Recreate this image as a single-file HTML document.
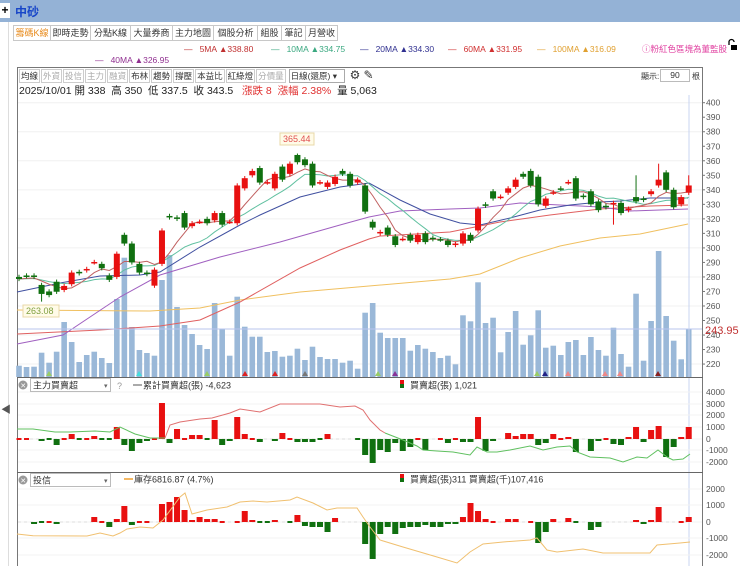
<!DOCTYPE html>
<html><head><meta charset="utf-8">
<style>
*{margin:0;padding:0;box-sizing:border-box}
body{width:740px;height:566px;overflow:hidden;background:#fff;font-family:"Liberation Sans","Noto Sans CJK TC",sans-serif;position:relative;color:#333}
.top{position:absolute;left:0;top:0;width:740px;height:22px;background:#94b2d6}
.plus{position:absolute;left:0;top:3px;width:10px;height:15px;background:#fff;font-size:12px;font-weight:bold;line-height:15px;text-align:center;color:#000}
.title{position:absolute;left:15px;top:3px;font-size:12px;font-weight:bold;color:#1846c8}
.tabs{position:absolute;left:13px;top:25px;height:16px;display:flex}
.tab{border:1px solid #c8c8c8;border-bottom:none;font-size:9px;line-height:15px;text-align:center;color:#333;background:#fff;margin-right:-1px;white-space:nowrap;overflow:hidden}
.tab.a{color:#e88a1a}
.t{position:absolute;font-size:8.5px;white-space:nowrap}
svg{position:absolute;left:0;top:0}
.tb span{border:1px solid #ccc;padding:0 1px;margin-right:1px}
</style></head><body>
<div class="top"><div class="plus">+</div><div class="title">中砂</div></div>
<div style="position:absolute;left:8px;top:22px;width:1px;height:544px;background:#ddd"></div>
<div class="tabs">
<div class="tab a" style="width:38px">籌碼K線</div><div class="tab" style="width:41px">即時走勢</div><div class="tab" style="width:41px">分點K線</div><div class="tab" style="width:43px">大量券商</div><div class="tab" style="width:42px">主力地圖</div><div class="tab" style="width:45px">個股分析</div><div class="tab" style="width:25px">組股</div><div class="tab" style="width:25px">筆記</div><div class="tab" style="width:33px">月營收</div>
</div>
<div style="position:absolute;left:13px;top:40px;width:324px;height:1px;background:#c8c8c8"></div>
<div class="t" style="left:184px;top:44px;color:#c03030">—&nbsp;&nbsp; 5MA ▲338.80</div>
<div class="t" style="left:271px;top:44px;color:#3aa880">—&nbsp;&nbsp; 10MA ▲334.75</div>
<div class="t" style="left:360px;top:44px;color:#303090">—&nbsp;&nbsp; 20MA ▲334.30</div>
<div class="t" style="left:448px;top:44px;color:#d03030">—&nbsp;&nbsp; 60MA ▲331.95</div>
<div class="t" style="left:537px;top:44px;color:#e0a030">—&nbsp;&nbsp; 100MA ▲316.09</div>
<div class="t" style="left:642px;top:43px;color:#e040a0">ⓘ粉紅色區塊為董監股</div>
<div class="t" style="left:95px;top:55px;color:#903090">—&nbsp;&nbsp; 40MA ▲326.95</div>
<svg width="740" height="566" style="z-index:2;pointer-events:none"><path d="M729 45 v-3 a2.5 2.5 0 0 1 5 0" fill="none" stroke="#000" stroke-width="1.3"/><rect x="731" y="45" width="6" height="5" fill="#000"/></svg>
<div style="position:absolute;left:17px;top:67px;width:686px;height:499px;border-left:1px solid #777;border-top:1px solid #777;border-right:1px solid #777"></div>
<div class="tb" style="position:absolute;left:19px;top:69px;display:flex;font-size:8.5px;line-height:12px">
<span>均線</span><span style="color:#aaa">外資</span><span style="color:#aaa">投信</span><span style="color:#aaa">主力</span><span style="color:#aaa">融資</span><span>布林</span><span>趨勢</span><span>撐壓</span><span>本益比</span><span>紅綠燈</span><span style="color:#aaa;margin-right:3px">分價量</span><span style="border-color:#aaa;width:56px">日線(還原)&nbsp;▾</span>
<b style="font-size:12px;margin-left:4px;line-height:12px;font-weight:normal">⚙</b><b style="font-size:12px;margin-left:3px;line-height:12px;font-weight:normal">✎</b></div>
<div class="t" style="left:641px;top:71px;font-size:8px">顯示:</div>
<div style="position:absolute;left:660px;top:69px;width:30px;height:13px;border:1px solid #bbb;font-size:8.5px;text-align:center;line-height:11px">90</div>
<div class="t" style="left:692px;top:71px;font-size:8px">根</div>
<div class="t" style="left:19px;top:83px;font-size:10.5px;color:#222">2025/10/01 開 338&nbsp; 高 350&nbsp; 低 337.5&nbsp; 收 343.5&nbsp;&nbsp; <span style="color:#e03030">漲跌 8&nbsp; 漲幅 2.38%</span>&nbsp; 量 5,063</div>
<div class="t" style="left:1px;top:401px;font-size:10px;color:#555">◀</div>
<svg id="s" width="740" height="566" viewBox="0 0 740 566" font-family="Liberation Sans, Noto Sans CJK TC, sans-serif"></svg>
<script>
var S=document.getElementById('s'),h='';
function Y(p){return 102.7+(400-p)*1.452}
function X(i){return 19+i*7.525}
for(var p=400;p>=220;p-=20)h+='<line x1="18" x2="702" y1="'+Y(p)+'" y2="'+Y(p)+'" stroke="#f0f0f0"/>';
for(var p=400;p>=220;p-=10)h+='<text x="706" y="'+(Y(p)+3)+'" font-size="8.5" fill="#555">'+p+'</text><line x1="702" x2="705" y1="'+Y(p)+'" y2="'+Y(p)+'" stroke="#777"/>';
var C=[[280,278.6],[281,280.5],[281,280],[274.5,268.3],[270,267.5],[276.7,269.8],[271,273.8],[275,283],[283.5,282.5],[284.5,285.5],[290,290.3],[289,286],[281,278],[280,296],[309,303],[303,290],[289,283],[283,282],[274,285],[289,312],[322,321],[321,320],[324,314],[315,317],[318,318],[320,317],[319,324],[324,316],[318,318],[317,343],[341,348],[350,353],[355,345],[345,345.3],[341,351],[356,347],[351,358],[364,359],[361,357],[358,343],[345,345.3],[342,345],[344,349],[353,351],[351,343],[345,347],[343,325],
[318,314],[310,311],[314,309],[308,302],[306,306.3],[309,305],[304,309],[310,304],[307,306],[306,305.7],[305,302],[302,303],[303,310],[309,305],[312,327],[330,329],[339,334],[335,335.3],[338,341],[342,347],[351,349],[353,343],[349,330],[329,334],[338,338.3],[341,340.7],[345,345.4],[348,334],[336,335],[339,330],[332,326],[329,328],[330,331],[331,324],[326,327],[335,332],[334,333],[337,339],[343,347],[352,340],[340,328],[330,335],[338,343]];
var V=[365.7,367,366.7,352.7,362.7,351.7,322,342,362,355,351.7,358,363,299,257.7,327,350,353,355.7,280,255,307,325,334,345,349,303,329,355.7,296.7,326.7,336.7,336.7,352,351,356.7,355.7,348.7,360,346.7,357,359,359,362.7,360.7,368.7,312.7,303,332.7,338,338,338,350.7,345,348.7,352,358,355.7,364.3,315.3,321.3,282.3,323,317.7,352.3,332,311,344.7,335.3,310.3,347.7,345.7,355,342,340,355,337,350,355.7,327.7,354,366.7,293.7,360.7,321,251,316,340.7,359.3,329];
function pl(pts,c){h+='<polyline fill="none" stroke="'+c+'" stroke-width="1" points="'+pts+'"/>'}
for(var i=0;i<90;i++){h+='<rect x="'+(X(i)-2.8)+'" y="'+V[i]+'" width="5.6" height="'+(377-V[i])+'" fill="#9ab8d8"/>'}
pl('17,310 150,311 200,308 240,300 300,292 369,286 450,279 480,274 520,258 560,246 600,238 640,234 688,224','#f0c060');
pl('17,334 100,330 160,326 200,320 240,302 300,268 340,250 369,239 380,236 450,232 500,222 550,215 600,209 650,206 688,205','#e06060');
pl('17,344 63,335 120,297 160,275 220,257 280,242 340,225 369,217 400,211 450,209 480,208 520,203 560,205 600,207 630,211 660,210 688,209','#a060c0');
pl('17,292 60,283 100,276 140,275 160,272 200,247 240,225 260,215 300,197 340,187 369,183 400,200 430,214 460,223 480,225 510,218 540,210 570,205 600,202 620,201 650,198 688,198','#4050a0');
h+='<line x1="18" x2="702" y1="329" y2="329" stroke="#b8c4ee"/>';
h+='<line x1="689" x2="689" y1="95" y2="566" stroke="#c8d4f0"/>';
function ma(n,col){var pts='';for(var i=0;i<90;i++){var s=0;for(var k=0;k<n;k++){var j=Math.max(0,i-k);s+=C[j][1]}pts+=X(i)+','+Y(s/n)+' '}pl(pts,col)}
ma(10,'#60c0a0');ma(5,'#c06060');
for(var i=0;i<90;i++){var o=C[i][0],c=C[i][1],up=c>=o,col=up?'#e81010':'#107010';var hi=Math.max(o,c)+1.5,lo=Math.min(o,c)-1.5;if(i==37)hi=365;if(i==79)lo=316;if(i==82)hi=350;if(i==85)hi=358;if(i==89)hi=350;if(i==3)lo=263;
h+='<line x1="'+X(i)+'" x2="'+X(i)+'" y1="'+Y(hi)+'" y2="'+Y(lo)+'" stroke="'+col+'"/>';var t=Y(Math.max(o,c)),b=Y(Math.min(o,c));h+='<rect x="'+(X(i)-3)+'" y="'+t+'" width="6" height="'+Math.max(1.5,b-t)+'" fill="'+col+'"/>'}
h+='<rect x="280" y="133" width="34" height="12" fill="#fffbe8" stroke="#e8d8a8"/><text x="283" y="142" font-size="9" fill="#e05050">365.44</text>';
h+='<rect x="23" y="305" width="36" height="12" fill="#fffbe8" stroke="#e8d8a8"/><text x="26" y="314" font-size="9" fill="#80a040">263.08</text>';
h+='<text x="705" y="334" font-size="11" fill="#c03030">243.95</text>';
[[49,'#9c6'],[139,'#4dd'],[207,'#9c6'],[245,'#d22'],[275,'#d22'],[305,'#777'],[378,'#9c6'],[395,'#839'],[537,'#9c6'],[545,'#228'],[568,'#e88'],[605,'#e88'],[620,'#e88'],[658,'#822']].forEach(function(m){h+='<polygon points="'+(m[0]-3)+',376 '+(m[0]+3)+',376 '+m[0]+',371" fill="'+m[1]+'"/>'});
h+='<line x1="17" x2="703" y1="377.5" y2="377.5" stroke="#666"/><line x1="17" x2="703" y1="472.5" y2="472.5" stroke="#666"/>';
[[4000,392],[3000,404],[2000,415],[1000,427],[0,439],[-1000,450],[-2000,462]].forEach(function(a){h+='<text x="706" y="'+(a[1]+3)+'" font-size="8.5" fill="#555">'+a[0]+'</text><line x1="18" x2="702" y1="'+a[1]+'" y2="'+a[1]+'" stroke="#f3f3f3"/>'});
h+='<line x1="18" x2="689" y1="439" y2="439" stroke="#ddd" stroke-dasharray="3,3"/>';
var P1=[1,1,0,-2,-1,-6,1,5,-1,1,3,-1,-1,12,-6,-12,-4,-2,1,36,-4,10,1,4,4,-1,19,-6,-2,22,5,1,-3,0,-2,6,1,-3,-3,-3,-1,5,0,0,0,-1,-16,-24,-11,-13,-4,-12,-8,1,-11,0,1,-4,1,-3,-3,22,-12,-2,0,6,3,5,5,-6,-4,5,1,2,-13,0,-12,-2,1,-5,-6,2,12,-3,9,13,-18,-8,2,12];
function bars(arr,z){for(var i=0;i<90;i++){var v=arr[i];if(v==0)continue;var col=v>0?'#e81010':'#107010';var a=Math.abs(v);if(a<=1){h+='<rect x="'+(X(i)-2.5)+'" y="'+(z-1)+'" width="5" height="2" fill="'+col+'"/>';continue}h+='<rect x="'+(X(i)-3)+'" y="'+(v>0?z-a:z)+'" width="6" height="'+a+'" fill="'+col+'"/>'}}
bars(P1,439);
pl('17,429 33,429 55,432 70,432 95,431 110,432 120,427 135,434 150,438 165,438','#60c060');
pl('165,438 170,425 180,422 200,419 212,418 230,413 240,409 260,412 280,404 300,404 320,404 340,407 355,406 363,410 370,420 380,430 385,433','#e07070');
pl('385,433 403,440 417,446 423,450 437,451 453,452 470,455 477,447 487,452 497,452 510,450 530,446 543,450 557,447 570,446 577,452 590,457 610,458 623,462 637,457 647,458 658,450 667,457 673,460 683,459 690,454','#60c060');
[[2000,489],[1000,505],[0,522],[-1000,538],[-2000,555]].forEach(function(a){h+='<text x="706" y="'+(a[1]+3)+'" font-size="8.5" fill="#555">'+a[0]+'</text><line x1="18" x2="702" y1="'+a[1]+'" y2="'+a[1]+'" stroke="#f3f3f3"/>'});
h+='<line x1="18" x2="689" y1="522" y2="522" stroke="#ddd" stroke-dasharray="3,3"/>';
var P2=[0,0,-2,-1,1,-2,0,0,0,0,5,1,-5,3,16,-3,1,1,0,18,20,25,12,2,5,3,3,1,0,1,11,2,-1,-1,2,0,-1,7,-4,-5,-5,-10,4,0,0,0,-22,-37,-12,-5,-12,-6,-5,-5,-3,-5,-5,-2,-2,5,19,11,3,1,0,3,3,0,1,-21,-10,3,0,4,-1,0,-8,-5,0,0,0,0,2,-2,2,15,0,0,1,5];
bars(P2,522);
pl('17,534 33,535.7 87,536 100,533 113,536 120,533 127,529 140,527 153,528 163,520 180,497 185,493 192,514 207,510 227,507 240,502 253,501 267,502 290,500 297,497 313,503 327,510 337,508 357,508 363,517 370,527 380,540 403,547 437,557 457,563 470,552 483,544 503,542 530,540 537,538 547,550 557,552 583,549 603,553 637,553 650,553 657,545 680,543 690,542','#f0c070');
function hdr(y,label){h+='<circle cx="23" cy="'+y+'" r="4.5" fill="#999"/><text x="20.3" y="'+(y+3)+'" font-size="7" fill="#fff">✕</text><rect x="30.5" y="'+(y-6.5)+'" width="80" height="13" fill="#fff" stroke="#bbb"/><text x="33" y="'+(y+3.5)+'" font-size="9" fill="#333">'+label+'</text><text x="104" y="'+(y+3)+'" font-size="7" fill="#666">▾</text>'}
hdr(385,'主力買賣超');hdr(480,'投信');
h+='<text x="117" y="389" font-size="9" fill="#999">?</text><line x1="133" x2="142" y1="385" y2="385" stroke="#555"/><text x="143" y="388.5" font-size="9" fill="#333">累計買賣超(張) -4,623</text>';
h+='<rect x="400" y="380" width="4" height="4" fill="#e81010"/><rect x="400" y="384" width="4" height="4" fill="#107010"/><text x="410" y="388.5" font-size="9" fill="#333">買賣超(張) 1,021</text>';
h+='<line x1="124" x2="133" y1="479" y2="479" stroke="#f0a030" stroke-width="1.5"/><text x="134" y="482.5" font-size="9" fill="#333">庫存6816.87 (4.7%)</text>';
h+='<rect x="400" y="474" width="4" height="4" fill="#e81010"/><rect x="400" y="478" width="4" height="4" fill="#107010"/><text x="410" y="482.5" font-size="9" fill="#333">買賣超(張)311 買賣超(千)107,416</text>';
S.innerHTML=h;
</script>
</body></html>
